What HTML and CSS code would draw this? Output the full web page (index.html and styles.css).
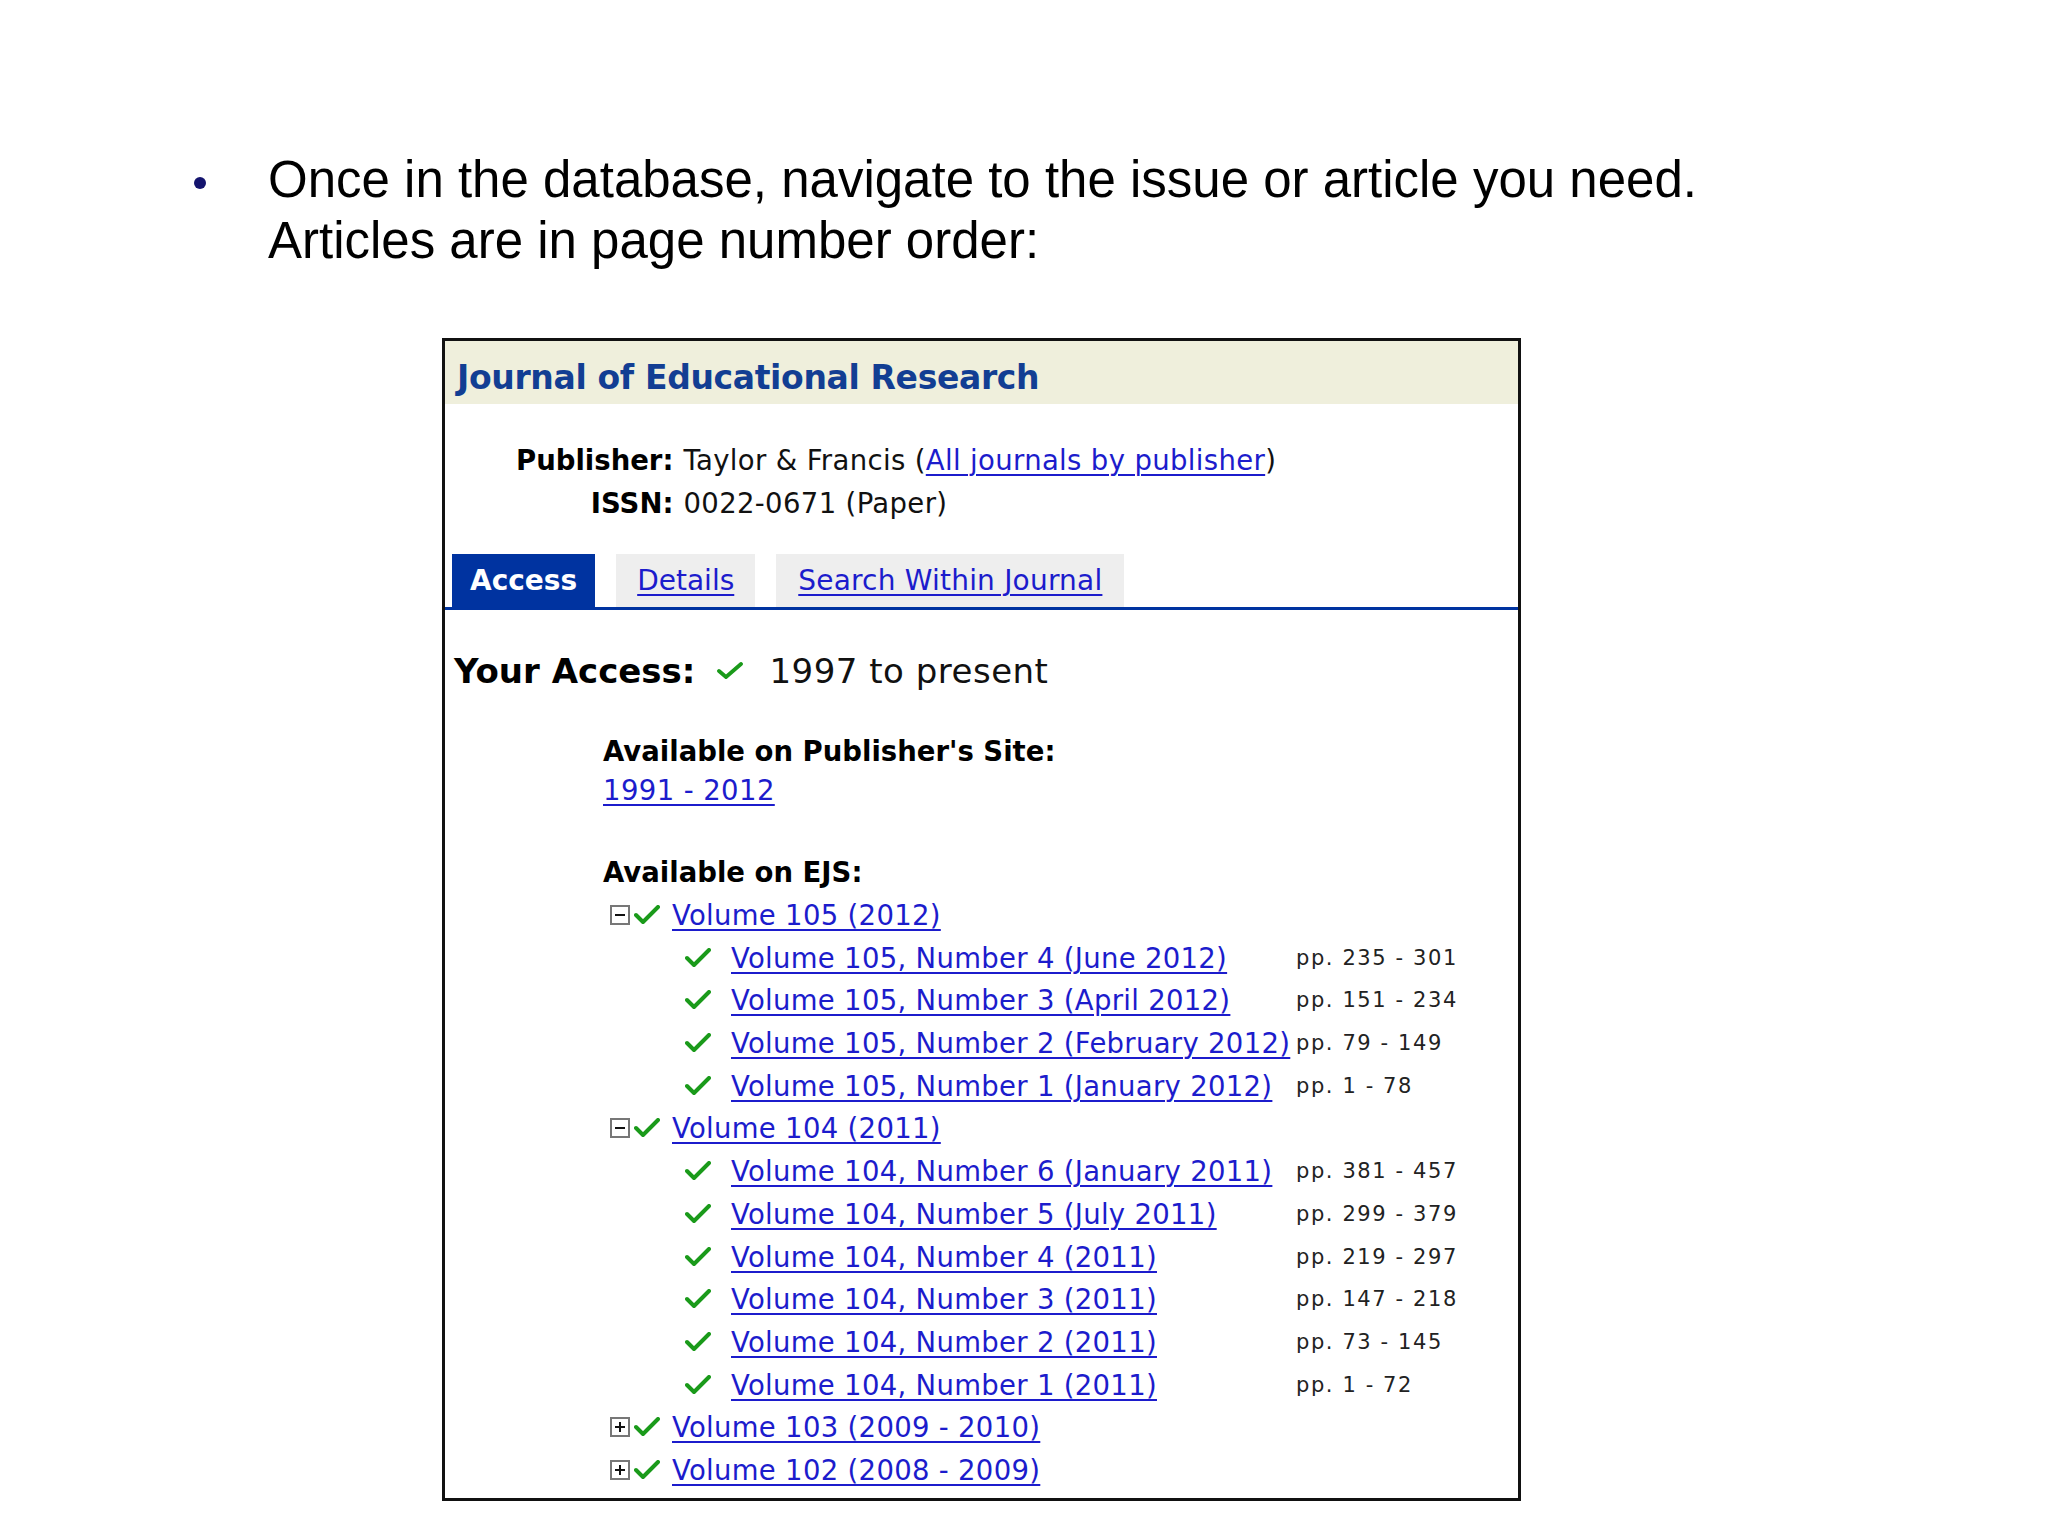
FILE: index.html
```html
<!DOCTYPE html>
<html lang="en">
<head>
	<meta charset="UTF-8">
	<title>Journal access</title>
	<link rel="stylesheet" href="styles.css">
</head>
<body>
	<div class="slide">
		<div class="point">
			<span class="dot"></span>
			<p>Once in the database, navigate to the issue or article you need.<br>Articles are in page number order:</p>
		</div>

		<div class="journal">
			<h1 class="jtitle">Journal of Educational Research</h1>

			<div class="meta">
				<b>Publisher:</b><span>Taylor &amp; Francis (<a href="#">All journals by publisher</a>)</span>
				<b>ISSN:</b><span>0022-0671 (Paper)</span>
			</div>

			<div class="tabs">
				<span class="tab on">Access</span>
				<span class="tab"><a href="#">Details</a></span>
				<span class="tab wide"><a href="#">Search Within Journal</a></span>
			</div>

			<div class="access">
				<b>Your Access:</b>
				<svg class="tick big" viewBox="0 0 26 18"><path d="M2 9 L9 15 L24 2"/></svg>
				<span>1997 to present</span>
			</div>

			<div class="avail">
				<div class="line"><b>Available on Publisher's Site:</b></div>
				<div class="line"><a href="#">1991 - 2012</a></div>

				<div class="tree">
					<div class="row"><b>Available on EJS:</b></div>

					<div class="row vol">
						<span class="tog minus"></span>
						<svg class="tick" viewBox="0 0 26 20"><path d="M2 10 L9 17 L24 2"/></svg>
						<a href="#">Volume 105 (2012)</a>
					</div>
					<div class="row issue">
						<svg class="tick" viewBox="0 0 26 20"><path d="M2 10 L9 17 L24 2"/></svg>
						<span class="ilink"><a href="#">Volume 105, Number 4 (June 2012)</a></span>
						<span class="pp">pp. 235 - 301</span>
					</div>
					<div class="row issue">
						<svg class="tick" viewBox="0 0 26 20"><path d="M2 10 L9 17 L24 2"/></svg>
						<span class="ilink"><a href="#">Volume 105, Number 3 (April 2012)</a></span>
						<span class="pp">pp. 151 - 234</span>
					</div>
					<div class="row issue">
						<svg class="tick" viewBox="0 0 26 20"><path d="M2 10 L9 17 L24 2"/></svg>
						<span class="ilink"><a href="#">Volume 105, Number 2 (February 2012)</a></span>
						<span class="pp">pp. 79 - 149</span>
					</div>
					<div class="row issue">
						<svg class="tick" viewBox="0 0 26 20"><path d="M2 10 L9 17 L24 2"/></svg>
						<span class="ilink"><a href="#">Volume 105, Number 1 (January 2012)</a></span>
						<span class="pp">pp. 1 - 78</span>
					</div>

					<div class="row vol">
						<span class="tog minus"></span>
						<svg class="tick" viewBox="0 0 26 20"><path d="M2 10 L9 17 L24 2"/></svg>
						<a href="#">Volume 104 (2011)</a>
					</div>
					<div class="row issue">
						<svg class="tick" viewBox="0 0 26 20"><path d="M2 10 L9 17 L24 2"/></svg>
						<span class="ilink"><a href="#">Volume 104, Number 6 (January 2011)</a></span>
						<span class="pp">pp. 381 - 457</span>
					</div>
					<div class="row issue">
						<svg class="tick" viewBox="0 0 26 20"><path d="M2 10 L9 17 L24 2"/></svg>
						<span class="ilink"><a href="#">Volume 104, Number 5 (July 2011)</a></span>
						<span class="pp">pp. 299 - 379</span>
					</div>
					<div class="row issue">
						<svg class="tick" viewBox="0 0 26 20"><path d="M2 10 L9 17 L24 2"/></svg>
						<span class="ilink"><a href="#">Volume 104, Number 4 (2011)</a></span>
						<span class="pp">pp. 219 - 297</span>
					</div>
					<div class="row issue">
						<svg class="tick" viewBox="0 0 26 20"><path d="M2 10 L9 17 L24 2"/></svg>
						<span class="ilink"><a href="#">Volume 104, Number 3 (2011)</a></span>
						<span class="pp">pp. 147 - 218</span>
					</div>
					<div class="row issue">
						<svg class="tick" viewBox="0 0 26 20"><path d="M2 10 L9 17 L24 2"/></svg>
						<span class="ilink"><a href="#">Volume 104, Number 2 (2011)</a></span>
						<span class="pp">pp. 73 - 145</span>
					</div>
					<div class="row issue">
						<svg class="tick" viewBox="0 0 26 20"><path d="M2 10 L9 17 L24 2"/></svg>
						<span class="ilink"><a href="#">Volume 104, Number 1 (2011)</a></span>
						<span class="pp">pp. 1 - 72</span>
					</div>

					<div class="row vol">
						<span class="tog plus"></span>
						<svg class="tick" viewBox="0 0 26 20"><path d="M2 10 L9 17 L24 2"/></svg>
						<a href="#">Volume 103 (2009 - 2010)</a>
					</div>
					<div class="row vol">
						<span class="tog plus"></span>
						<svg class="tick" viewBox="0 0 26 20"><path d="M2 10 L9 17 L24 2"/></svg>
						<a href="#">Volume 102 (2008 - 2009)</a>
					</div>
				</div>
			</div>
		</div>
	</div>
</body>
</html>
```

FILE: styles.css
```css
*{margin:0;padding:0;box-sizing:border-box;}
body{background:#fff;}
.slide{padding:149px 0 0 0;}

/* bullet text */
.point{display:flex;align-items:flex-start;padding-left:194px;font-family:"Liberation Sans",Arial,sans-serif;font-size:51px;line-height:61px;color:#000;}
.point .dot{flex:none;width:12px;height:12px;border-radius:50%;background:#14146e;margin-top:28px;margin-right:62px;}
.point p{white-space:nowrap;}

/* journal box */
.journal{margin:67px 0 0 442px;width:1079px;border:3px solid #111;font-family:"DejaVu Sans",Verdana,sans-serif;font-size:27.5px;color:#111;padding-bottom:7px;}
.journal a{color:#1c1ccc;text-decoration:underline;text-decoration-thickness:2px;text-underline-offset:4px;}
.journal b{color:#000;}

.jtitle{background:#efefdc;height:63px;padding:11px 0 0 12px;line-height:52px;font-size:33px;letter-spacing:-0.35px;font-weight:bold;color:#123e93;}

.meta{display:grid;grid-template-columns:auto auto;justify-content:start;column-gap:10px;margin:35px 0 0 71px;line-height:43px;white-space:nowrap;}
.meta b{justify-self:end;}
.meta span{letter-spacing:0.35px;}

.tabs{display:flex;gap:21px;margin-top:29px;padding-left:7px;border-bottom:3px solid #0033a0;}
.tab{height:53px;line-height:53px;padding:0 21px;background:#eeeeee;font-size:28px;}
.tab.on{background:#0033a0;color:#fff;font-weight:bold;padding:0 18px;}
.tab.wide{padding:0 22px;letter-spacing:0.2px;}

.access{display:flex;align-items:center;height:50px;margin-top:36px;padding-left:9px;font-size:34px;}
.access b{margin-right:22px;}
.access span{margin-left:26px;letter-spacing:0.5px;}

.tick{display:block;flex:none;width:26px;height:20px;fill:none;stroke:#1a9a1a;stroke-width:4;stroke-linecap:round;stroke-linejoin:round;}
.tick.big{height:18px;stroke-width:3.8;}

.avail{margin:36px 0 0 158px;}
.avail .line{line-height:39px;}
.avail .line a{letter-spacing:0.4px;}

.tree{margin-top:41px;}
.tree a{letter-spacing:0.3px;}
.row{display:flex;align-items:center;height:42.7px;white-space:nowrap;}
.vol{padding-left:7px;}
.vol .tick{margin:0 12px 0 4px;}
.tog{flex:none;position:relative;width:20px;height:20px;border:2px solid #777;background:#fff;}
.tog::before{content:"";position:absolute;left:3px;top:7px;width:10px;height:2px;background:#111;}
.tog.plus::after{content:"";position:absolute;left:7px;top:3px;width:2px;height:10px;background:#111;}

.issue{padding-left:82px;}
.issue .tick{margin-right:20px;}
.ilink{flex:none;width:565px;}
.pp{font-size:21px;letter-spacing:1.6px;color:#222;}
```
